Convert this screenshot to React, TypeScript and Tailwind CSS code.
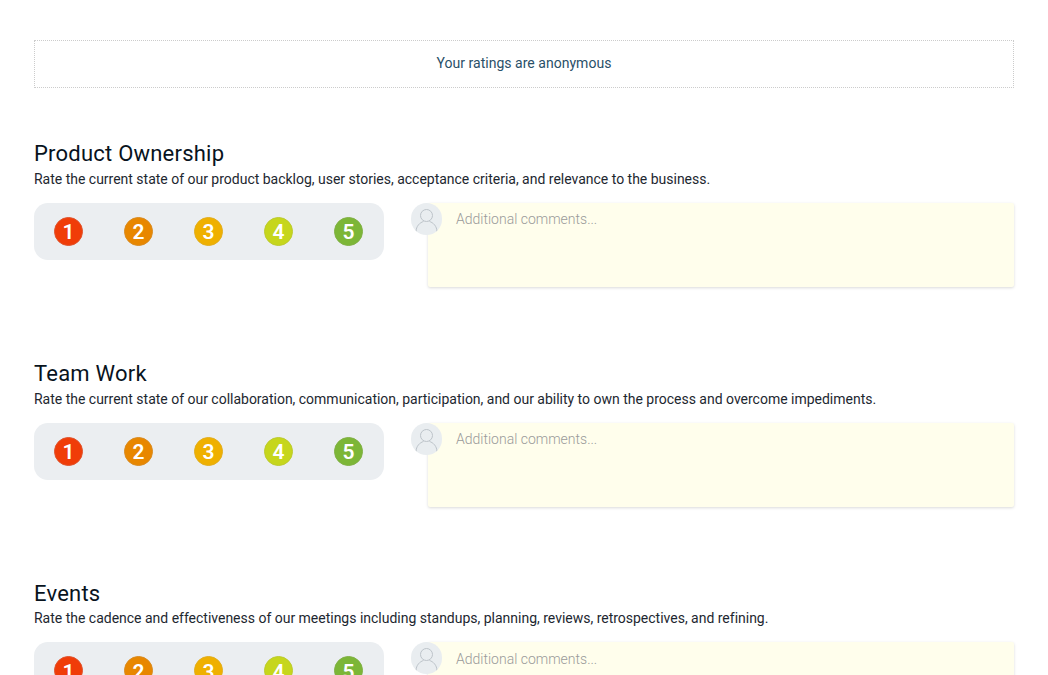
const sections = [
  {
    title: "Product Ownership",
    description:
      "Rate the current state of our product backlog, user stories, acceptance criteria, and relevance to the business.",
  },
  {
    title: "Team Work",
    description:
      "Rate the current state of our collaboration, communication, participation, and our ability to own the process and overcome impediments.",
  },
  {
    title: "Events",
    description:
      "Rate the cadence and effectiveness of our meetings including standups, planning, reviews, retrospectives, and refining.",
  },
];

const ratings = [
  { value: 1, color: "bg-[#f03c08] border-[#e0512a]" },
  { value: 2, color: "bg-[#e88700] border-[#d98a1e]" },
  { value: 3, color: "bg-[#efb000] border-[#e2ad1c]" },
  { value: 4, color: "bg-[#c6d61c] border-[#bccb2e]" },
  { value: 5, color: "bg-[#7cb637] border-[#80b044]" },
];

const Avatar = () => (
  <div className="absolute left-[-17px] top-0 w-[31px] h-8 rounded-full bg-[#e9edf0] overflow-hidden">
    <svg viewBox="0 0 31 32" className="w-full h-full" fill="none" stroke="#bcc3c9" strokeWidth="1">
      <circle cx="15.5" cy="12.5" r="6" />
      <path d="M5 29c0-6 4-9.5 7.5-10.500M26 29c0-6-4-9.500-7.500-10.500" />
    </svg>
  </div>
);

const RatingSection = ({ title, description }: { title: string; description: string }) => (
  <div className="h-[219.6px]">
    <h2 className="text-[22px] leading-[26px] font-normal tracking-[0.22px] text-[#08131d]">{title}</h2>
    <p className="text-sm leading-5 mt-[1.6px] tracking-[-0.01px] text-[#1d2730]">{description}</p>
    <div className="flex mt-[14.2px]">
      <div className="w-[350px] h-[57px] rounded-[14px] bg-[#ebeef1] flex items-center gap-[41px] px-5 shrink-0">
        {ratings.map((rating) => (
          <div
            key={rating.value}
            className={`w-[29px] h-[29px] pt-[3px] rounded-full border flex items-center justify-center text-white text-[21px] font-semibold ${rating.color}`}
          >
            {rating.value}
          </div>
        ))}
      </div>
      <div className="relative ml-11 flex-1 h-[84px] bg-[#fffeec] rounded-[2px] shadow-[0_1px_3px_rgba(0,0,0,0.15)] pl-7 pt-[4.2px]">
        <Avatar />
        <span className="text-sm leading-5 font-light text-[#9a9a9a]">Additional comments...</span>
      </div>
    </div>
  </div>
);

export default function App() {
  return (
    <div className="h-[675px] overflow-hidden bg-white px-[34px] pt-10 font-['Roboto',sans-serif]">
      <div className="h-12 border border-dotted border-[#cccccc] flex items-center justify-center pb-[2px] text-sm font-normal tracking-[0.02px] text-[#2a5068]">
        Your ratings are anonymous
      </div>
      <div className="mt-[53.4px]">
        {sections.map((section) => (
          <RatingSection key={section.title} {...section} />
        ))}
      </div>
    </div>
  );
}
